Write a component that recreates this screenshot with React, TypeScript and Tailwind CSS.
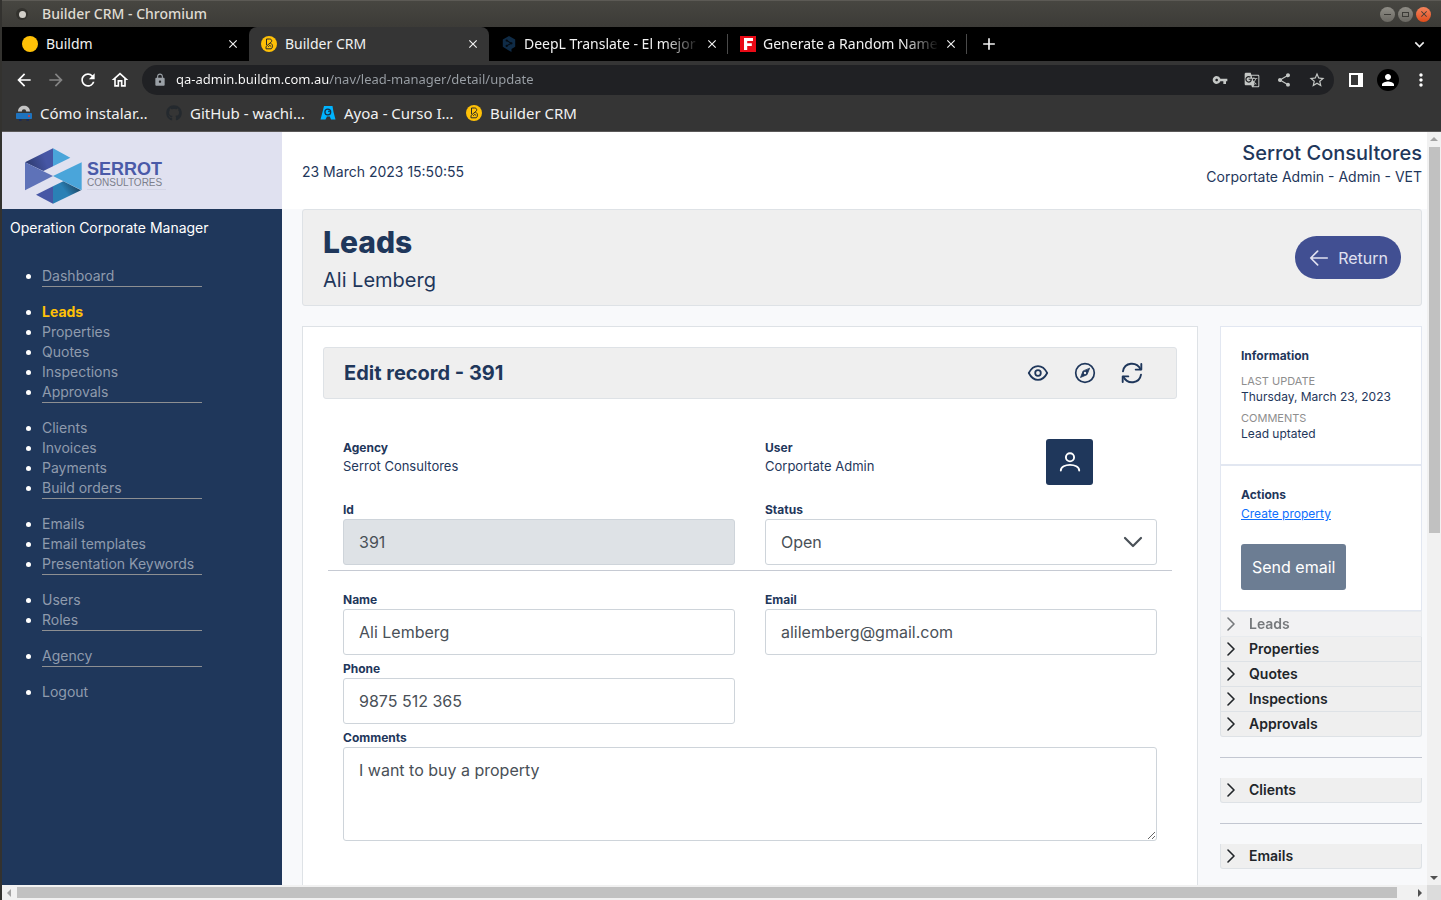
import React from "react";
import {
  MdArrowBack,
  MdArrowForward,
  MdRefresh,
  MdOutlineHome,
  MdLock,
  MdVpnKey,
  MdGTranslate,
  MdShare,
  MdStarBorder,
  MdPerson,
  MdMoreVert,
  MdKeyboardArrowDown,
  MdClose,
  MdAdd,
} from "react-icons/md";
import { FaGithub } from "react-icons/fa";

/* ---------- small drawings ---------- */

function BuilderMark() {
  return (
    <svg viewBox="0 0 16 16" className="size-4 shrink-0" aria-hidden="true">
      <circle cx="8" cy="8" r="8" fill="#ffc107" />
      <path
        d="M5.500 9V3H8.600C11.300 3 11.300 6 9.200 6.900L5 10.500V12.800H10.200C12.300 11.500 11.800 8 9.200 6.900M7.200 10.800L8.800 9.300L10.400 10.800"
        fill="none"
        stroke="#2a2a2a"
        strokeWidth="1"
      />
    </svg>
  );
}

function DeeplMark() {
  return (
    <svg viewBox="0 0 16 16" className="size-4 shrink-0" aria-hidden="true">
      <path d="M8 0l6.200 3.500v7.200L10.500 13V16L7 14 1.800 10.700V3.500z" fill="#0f2b46" />
      <path d="M5.700 4.500l4.500 2.700-4.500 2.700" fill="none" stroke="#050a10" strokeWidth="1.100" />
      <circle cx="5.700" cy="4.500" r="1.100" fill="#050a10" />
      <circle cx="10.400" cy="7.300" r="1.100" fill="#050a10" />
      <circle cx="5.700" cy="9.900" r="1.100" fill="#050a10" />
    </svg>
  );
}

function NameMark() {
  return (
    <svg viewBox="0 0 16 16" className="size-4 shrink-0" aria-hidden="true">
      <rect width="16" height="16" fill="#ea0a16" />
      <path d="M4 2h9v3H7.200v2.200h4.600v2.700H7.200V14H4z" fill="#fff" />
    </svg>
  );
}

function CloudMark() {
  return (
    <svg viewBox="0 0 16 16" className="size-4 shrink-0" aria-hidden="true">
      <path d="M2 6.500C2 -1.200 14 -1.200 14 6.500H10.200a2.200 2.200 0 0 0-4.400 0z" fill="#c4c4c4" />
      <rect y="8" width="16" height="6" rx="0.800" fill="#1e73be" />
      <circle cx="13" cy="11" r="1" fill="#e53935" />
      <path d="M3 14h2.500v2H3zM10.500 14H13v2h-2.500z" fill="#1d2b50" />
    </svg>
  );
}

function AyoaMark() {
  return (
    <svg viewBox="0 0 16 16" className="size-4 shrink-0" aria-hidden="true">
      <path d="M4 1h8.500l1 6L15.500 14.500H11L9.800 11.500H7L5.500 14.500H0.500L2.500 7z" fill="#00b4ff" />
      <circle cx="7.800" cy="7" r="2.900" fill="none" stroke="#17324a" strokeWidth="1.300" />
      <circle cx="9" cy="6.300" r="0.900" fill="#17324a" />
    </svg>
  );
}

function SerrotMark() {
  return (
    <svg viewBox="72 50 177 174" className="h-[58px] w-[59px] shrink-0" aria-hidden="true">
      <defs>
        <linearGradient id="markDark" x1="0" y1="0.600" x2="1" y2="0.300">
          <stop offset="0" stopColor="#2d3a6e" />
          <stop offset="0.700" stopColor="#4656a5" />
        </linearGradient>
        <linearGradient id="markTeal" x1="0.900" y1="0.300" x2="0.200" y2="0.700">
          <stop offset="0" stopColor="#1d4a6a" />
          <stop offset="0.600" stopColor="#2a80b5" />
        </linearGradient>
      </defs>
      <path d="M75 96L159 54V108L130 122z" fill="url(#markDark)" />
      <path d="M159 54L211 82L159 108z" fill="#4aa5da" />
      <path d="M75 96L159 137L75 180z" fill="#5e72b8" />
      <path d="M245 96V180L159 137z" fill="#4aa5da" />
      <path d="M190 153L243 180L159 220V168z" fill="url(#markTeal)" />
      <path d="M159 168V220L108 193z" fill="#4656a5" />
    </svg>
  );
}

const lineIcon = {
  viewBox: "0 0 24 24",
  fill: "none",
  stroke: "currentColor",
  strokeWidth: 2,
  strokeLinecap: "round" as const,
  strokeLinejoin: "round" as const,
  "aria-hidden": true,
};

function EyeIcon() {
  return (
    <svg {...lineIcon} className="size-6">
      <path d="M2.800 12C7.500 2.800 16.500 2.800 21.200 12C16.500 21.200 7.500 21.200 2.800 12z" strokeWidth="1.800" />
      <circle cx="12" cy="12" r="2.800" strokeWidth="1.800" />
    </svg>
  );
}

function CompassIcon() {
  return (
    <svg {...lineIcon} className="size-6">
      <circle cx="12" cy="12" r="9.300" strokeWidth="1.700" />
      <path
        d="M16.500 7.500L14 13.700L7.500 16.500L10 10.300z"
        fill="currentColor"
        strokeWidth="0.800"
      />
      <circle cx="12" cy="12" r="1.200" fill="#efefef" stroke="none" />
    </svg>
  );
}

function SyncIcon() {
  return (
    <svg {...lineIcon} className="size-6">
      <path d="M3 10.300C4.500 1 16.500 0.200 20.600 8.200M21 13.700C19.500 23 7.500 23.800 3.400 15.800" strokeWidth="1.900" />
      <path d="M21.300 3V8.600H15.700M2.700 21V15.400H8.300" strokeWidth="1.900" />
    </svg>
  );
}

function UserIcon() {
  return (
    <svg {...lineIcon} className="size-6">
      <circle cx="12" cy="7.300" r="4.100" strokeWidth="1.900" />
      <path d="M2.800 20.500C2.800 13 21.200 13 21.200 20.500" strokeWidth="1.900" />
    </svg>
  );
}

/* ---------- browser chrome ---------- */

function TitleBar() {
  return (
    <div className="flex h-[27px] shrink-0 items-center border-t border-[#5c5a55] bg-linear-to-b from-[#474641] to-[#3c3b37] pr-[10px] pl-[14px]">
      <span className="flex size-3 items-center justify-center rounded-full bg-[#33322e]">
        <span className="size-[7px] rounded-full bg-[#d2cfc9]" />
      </span>
      <span className="ml-[14px] text-sm font-medium text-[#dfdbd2]">Builder CRM - Chromium</span>
      <div className="ml-auto flex gap-[3px]">
        <button aria-label="Minimise" className="flex size-[15px] items-center justify-center rounded-full bg-linear-to-b from-[#8f8d86] to-[#6a6862]">
          <span className="h-px w-[7px] bg-[#3c3b37]" />
        </button>
        <button aria-label="Maximise" className="flex size-[15px] items-center justify-center rounded-full bg-linear-to-b from-[#8f8d86] to-[#6a6862]">
          <span className="h-[5px] w-[7px] border border-[#3c3b37]" />
        </button>
        <button aria-label="Close window" className="flex size-[15px] items-center justify-center rounded-full bg-linear-to-b from-[#f4845c] to-[#df4b16] text-[#3c3b37]">
          <MdClose size={10} />
        </button>
      </div>
    </div>
  );
}

function Tab({ icon, title, active, fade, divider }: { icon: React.ReactNode; title: string; active?: boolean; fade?: boolean; divider?: boolean }) {
  return (
    <div className={active ? "flex w-60 items-center rounded-t-lg bg-[#353535] pr-2 pl-3" : "flex w-[239px] items-center pr-2 pl-3"}>
      {icon}
      <button
        className={
          fade
            ? "ml-[7px] min-w-0 flex-1 mask-r-from-80% text-left text-sm whitespace-nowrap"
            : "ml-2 min-w-0 flex-1 text-left text-sm whitespace-nowrap"
        }
      >
        {title}
      </button>
      <button aria-label={"Close " + title} className="ml-1 flex size-4 items-center justify-center">
        <MdClose size={14} />
      </button>
      {divider && <span className="-mr-2 ml-[7px] h-5 w-px bg-[#4a4a4a]" />}
    </div>
  );
}

function TabStrip() {
  return (
    <div className="flex h-[34px] shrink-0 bg-black pl-2 text-[#f1f1f1]">
      <Tab icon={<span className="size-4 shrink-0 rounded-full bg-[#ffc107]" />} title="Buildm" />
      <Tab icon={<BuilderMark />} title="Builder CRM" active />
      <Tab icon={<DeeplMark />} title="DeepL Translate - El mejor" fade divider />
      <Tab icon={<NameMark />} title="Generate a Random Name" fade divider />
      <button aria-label="New tab" className="ml-3 flex items-center">
        <MdAdd size={20} />
      </button>
      <button aria-label="Search tabs" className="mr-3 ml-auto flex items-center">
        <MdKeyboardArrowDown size={19} />
      </button>
    </div>
  );
}

function Toolbar() {
  return (
    <div className="flex h-[38px] shrink-0 items-center bg-[#353535] pr-[10px] pl-3 text-white">
      <div className="flex gap-3">
        <button aria-label="Back"><MdArrowBack size={20} /></button>
        <button aria-label="Forward" className="text-[#848484]"><MdArrowForward size={20} /></button>
        <button aria-label="Reload"><MdRefresh size={20} /></button>
        <button aria-label="Home"><MdOutlineHome size={20} /></button>
      </div>
      <div className="ml-3 flex h-[30px] flex-1 items-center rounded-full bg-[#202124] pr-2 pl-[11px] text-[#c4c7c5]">
        <MdLock size={14} className="text-[#9aa0a6]" />
        <input
          aria-label="Address"
          defaultValue="qa-admin.buildm.com.au/nav/lead-manager/detail/update"
          className="ml-[9px] min-w-0 flex-1 bg-[linear-gradient(90deg,#ffffff_153px,#9aa0a6_153px)] bg-clip-text text-[13px] text-transparent outline-none"
        />
        <div className="flex items-center gap-4">
          <button aria-label="Passwords"><MdVpnKey size={16} /></button>
          <button aria-label="Translate"><MdGTranslate size={16} /></button>
          <button aria-label="Share"><MdShare size={16} /></button>
          <button aria-label="Bookmark"><MdStarBorder size={18} /></button>
        </div>
      </div>
      <button aria-label="Side panel" className="ml-[15px] flex h-[14px] w-[14px] border-2 border-white">
        <span className="ml-auto h-full w-[3px] bg-white" />
      </button>
      <button aria-label="Profile" className="ml-[14px] flex size-[22px] items-center justify-center rounded-full bg-black">
        <MdPerson size={18} />
      </button>
      <button aria-label="Menu" className="ml-3"><MdMoreVert size={20} /></button>
    </div>
  );
}

function Bookmarks() {
  return (
    <nav aria-label="Bookmarks" className="flex h-[33px] shrink-0 items-center gap-4 border-b border-[#5a5858] bg-[#353535] pb-1 pl-[14px] text-[15px] whitespace-nowrap text-[#f1f1f1]">
      <a href="#instalar" className="flex w-[134px] items-center gap-2"><CloudMark />Cómo instalar…</a>
      <a href="#github" className="flex w-[138px] items-center gap-2"><FaGithub size={16} className="shrink-0 text-[#24292e]" />GitHub - wachi…</a>
      <a href="#ayoa" className="flex w-[130px] items-center gap-2"><AyoaMark />Ayoa - Curso I…</a>
      <a href="#crm" className="flex items-center gap-2"><BuilderMark />Builder CRM</a>
    </nav>
  );
}

/* ---------- page ---------- */

const menu = [
  ["Dashboard"],
  ["Leads", "Properties", "Quotes", "Inspections", "Approvals"],
  ["Clients", "Invoices", "Payments", "Build orders"],
  ["Emails", "Email templates", "Presentation Keywords"],
  ["Users", "Roles"],
  ["Agency"],
  ["Logout"],
];

function Sidebar() {
  return (
    <aside className="w-[280px] shrink-0 bg-[#1f375b]">
      <div className="flex h-[77px] items-center bg-[#e0e1f0] pt-[10px] pl-[22px]">
        <SerrotMark />
        <div className="ml-1 font-['Liberation_Sans',sans-serif]">
          <div className="text-lg leading-4 font-bold text-[#4a5aa8]">SERROT</div>
          <div className="border-b border-[#d3d5e6] pr-1 text-[10px] leading-3 text-[#7c7f8c]">CONSULTORES</div>
        </div>
      </div>
      <p className="mt-[9px] pl-2 text-sm leading-5 text-white">Operation Corporate Manager</p>
      <nav className="mt-7 flex flex-col gap-[15px] pl-10">
        {menu.map((group, i) => (
          <ul
            key={group[0]}
            className={
              i < menu.length - 1
                ? "w-40 border-b border-[#8d8f92] text-sm leading-5"
                : "w-40 text-sm leading-5"
            }
          >
            {group.map((item) => (
              <li key={item} className="-ml-4 flex items-center gap-[11px]">
                <span className="size-[5px] rounded-full bg-white" />
                <a
                  href={"#" + item}
                  className={item === "Leads" ? "font-bold whitespace-nowrap text-[#ffc107]" : "whitespace-nowrap text-[#8f9bad]"}
                >
                  {item}
                </a>
              </li>
            ))}
          </ul>
        ))}
      </nav>
    </aside>
  );
}

const labelClass = "block text-xs leading-[18px] font-bold text-[#1f375b]";
const fieldClass = "block h-[46px] w-full rounded-[3px] border border-[#ced4da] bg-white px-[15px] text-base text-[#495057]";

function LeadForm() {
  return (
    <section className="min-w-0 flex-1 border border-[#dee2e6] bg-white px-5 pt-5 pb-20">
      <header className="flex h-[52px] items-center rounded-[3px] border border-[#dee2e6] bg-[#efefef] pr-8 pl-5 text-[#1f375b]">
        <h2 className="text-xl font-bold">Edit record - 391</h2>
        <div className="ml-auto flex gap-[23px]">
          <button aria-label="View"><EyeIcon /></button>
          <button aria-label="Explore"><CompassIcon /></button>
          <button aria-label="Refresh"><SyncIcon /></button>
        </div>
      </header>
      <form className="mt-10 px-[5px]">
        <div className="grid grid-cols-12 pb-4">
          <div className="col-span-6 px-[15px]">
            <div className={labelClass}>Agency</div>
            <p className="text-[13px] leading-[18px] text-[#1f375b]">Serrot Consultores</p>
          </div>
          <div className="col-span-4 px-[15px]">
            <div className={labelClass}>User</div>
            <p className="text-[13px] leading-[18px] text-[#1f375b]">Corportate Admin</p>
          </div>
          <div className="col-span-2 px-[15px]">
            <button type="button" aria-label="User" className="flex h-[46px] w-[47px] items-center justify-center rounded-[3px] bg-[#1f375b] text-white">
              <UserIcon />
            </button>
          </div>
        </div>
        <div className="grid grid-cols-2 border-b border-[#c6cad3] pb-[5px]">
          <div className="px-[15px]">
            <label htmlFor="lead-id" className={labelClass}>Id</label>
            <input id="lead-id" disabled defaultValue="391" className="block h-[46px] w-full rounded-[3px] border border-[#ced4da] bg-[#dee2e6] px-[15px] text-base text-[#495057]" />
          </div>
          <div className="px-[15px]">
            <label htmlFor="lead-status" className={labelClass}>Status</label>
            <div className="relative">
              <select id="lead-status" className={fieldClass + " appearance-none"}>
                <option>Open</option>
              </select>
              <svg {...lineIcon} className="pointer-events-none absolute top-[11px] right-3 size-6 text-[#495057]">
                <path d="M4 8l8 8 8-8" strokeWidth="2.200" />
              </svg>
            </div>
          </div>
        </div>
        <div className="mt-5 grid grid-cols-2 gap-y-[5px]">
          <div className="px-[15px]">
            <label htmlFor="lead-name" className={labelClass}>Name</label>
            <input id="lead-name" defaultValue="Ali Lemberg" className={fieldClass} />
          </div>
          <div className="px-[15px]">
            <label htmlFor="lead-email" className={labelClass}>Email</label>
            <input id="lead-email" defaultValue="alilemberg@gmail.com" className={fieldClass} />
          </div>
          <div className="px-[15px]">
            <label htmlFor="lead-phone" className={labelClass}>Phone</label>
            <input id="lead-phone" defaultValue="9875 512 365" className={fieldClass} />
          </div>
          <div className="col-span-2 px-[15px]">
            <label htmlFor="lead-comments" className={labelClass}>Comments</label>
            <textarea
              id="lead-comments"
              defaultValue="I want to buy a property"
              className="block h-[94px] w-full rounded-[3px] border border-[#ced4da] bg-white px-[15px] py-[10px] text-base leading-6 text-[#495057]"
            />
          </div>
        </div>
      </form>
    </section>
  );
}

function Row({ title, disabled, first }: { title: string; disabled?: boolean; first?: boolean }) {
  return (
    <button
      disabled={disabled}
      className={
        "flex w-full items-center border-x border-b border-[#dee2e6] bg-[#efefef] pl-1 text-left text-sm leading-6 font-semibold text-[#212529] last:rounded-b-[3px] " +
        (first ? "border-t " : "") +
        (disabled ? "opacity-60" : "")
      }
    >
      <svg {...lineIcon} viewBox="0 0 14 14" className="size-[14px]">
        <path d="M3 1l6 6-6 6" strokeWidth="1.600" />
      </svg>
      <span className="ml-[10px]">{title}</span>
    </button>
  );
}

function SidePanel() {
  return (
    <aside className="w-[202px] shrink-0">
      <section className="h-[139px] border border-[#e2e7f1] bg-white px-5 pt-5 text-[#1f375b]">
        <h3 className="text-xs leading-[18px] font-bold">Information</h3>
        <dl>
          <dt className="mt-2 text-[11px] leading-4 text-[#8e8e8e]">LAST UPDATE</dt>
          <dd className="text-xs leading-4 whitespace-nowrap">Thursday, March 23, 2023</dd>
          <dt className="mt-[5px] text-[11px] leading-4 text-[#8e8e8e]">COMMENTS</dt>
          <dd className="text-xs leading-4">Lead uptated</dd>
        </dl>
      </section>
      <section className="h-[146px] border border-[#e2e7f1] bg-white px-5 pt-5 text-[#1f375b]">
        <h3 className="text-xs leading-[18px] font-bold">Actions</h3>
        <a href="#create" className="block text-xs leading-5 text-[#0d6efd] underline">Create property</a>
        <button className="mt-5 h-[46px] rounded-[3px] bg-[#6c7d93] px-[11px] text-base whitespace-nowrap text-white">Send email</button>
      </section>
      <div>
        <Row title="Leads" disabled first />
        <Row title="Properties" />
        <Row title="Quotes" />
        <Row title="Inspections" />
        <Row title="Approvals" />
      </div>
      <hr className="my-5 border-[#c3c7d1]" />
      <div><Row title="Clients" /></div>
      <hr className="my-5 border-[#c3c7d1]" />
      <div><Row title="Emails" /></div>
    </aside>
  );
}

function VerticalScrollbar() {
  return (
    <div className="flex w-[14px] shrink-0 flex-col items-center bg-[#f1f1f1] py-[5px]" aria-hidden="true">
      <span className="border-x-4 border-b-4 border-x-transparent border-b-[#a3a3a3]" />
      <div className="mt-[6px] flex w-[11px] flex-1 flex-col">
        <div className="h-[53%] bg-[#c1c1c1]" />
      </div>
      <span className="border-x-4 border-t-4 border-x-transparent border-t-[#505050]" />
    </div>
  );
}

function HorizontalScrollbar() {
  return (
    <div className="flex h-[15px] shrink-0 bg-[#f1f1f1]" aria-hidden="true">
      <div className="flex flex-1 items-center px-[5px]">
        <span className="border-y-4 border-r-4 border-y-transparent border-r-[#a3a3a3]" />
        <div className="mr-[21px] ml-[6px] h-[11px] flex-1 bg-[#c1c1c1]" />
        <span className="border-y-4 border-l-4 border-y-transparent border-l-[#505050]" />
      </div>
      <div className="w-[14px] bg-[#dcdcdc]" />
    </div>
  );
}

export default function App() {
  return (
    <div className="flex h-screen flex-col overflow-hidden border-l-2 border-[#33322f] font-['Noto_Sans',sans-serif]">
      <TitleBar />
      <TabStrip />
      <Toolbar />
      <Bookmarks />
      <div className="flex min-h-0 flex-1 overflow-hidden font-['Inter',sans-serif]">
        <Sidebar />
        <main className="min-w-0 flex-1 bg-[#f8f9fb] text-[#1f375b]">
          <header className="flex h-[77px] items-center justify-between bg-white pt-[2px] pr-[5px] pl-5">
            <time className="text-sm">23 March 2023 15:50:55</time>
            <div className="pb-[14px] text-right">
              <div className="text-xl leading-6 font-medium">Serrot Consultores</div>
              <div className="text-sm leading-6">Corportate Admin - Admin - VET</div>
            </div>
          </header>
          <div className="pr-[5px] pl-5">
            <section className="flex h-[97px] items-center justify-between rounded-[3px] border border-[#dee2e6] bg-[#efefef] px-5">
              <div className="pt-1">
                <h1 className="text-3xl leading-10 font-extrabold">Leads</h1>
                <p className="text-xl leading-9">Ali Lemberg</p>
              </div>
              <button className="flex h-[43px] items-center gap-2 rounded-full bg-[#414f92] px-[13px] text-base text-[#e0e1f0]">
                <svg {...lineIcon} className="size-[22px]">
                  <path d="M21 12H3M10.500 4.500L3 12l7.500 7.500" strokeWidth="1.800" />
                </svg>
                Return
              </button>
            </section>
            <div className="mt-5 flex gap-[22px]">
              <LeadForm />
              <SidePanel />
            </div>
          </div>
        </main>
        <VerticalScrollbar />
      </div>
      <HorizontalScrollbar />
    </div>
  );
}
